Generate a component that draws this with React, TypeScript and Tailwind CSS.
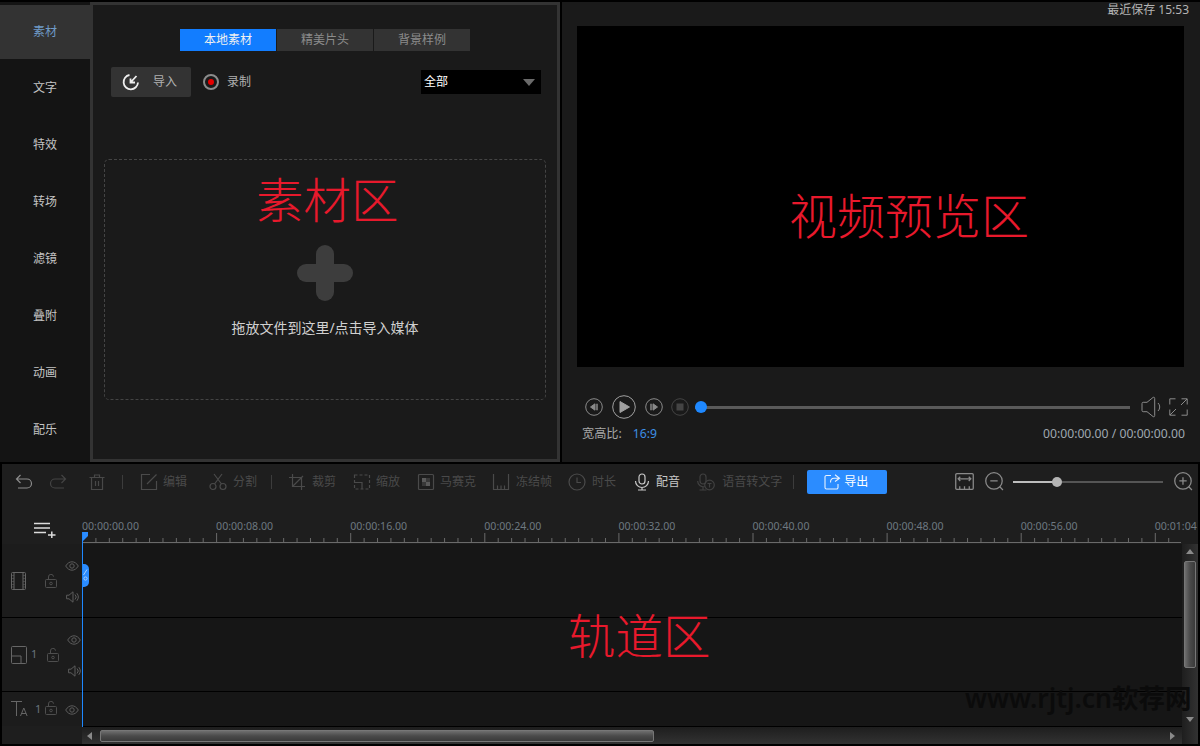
import type { ReactNode } from "react"

const font = "font-['Noto_Sans','Noto_Sans_CJK_SC',sans-serif]"

const sideItems = ["素材", "文字", "特效", "转场", "滤镜", "叠附", "动画", "配乐"]
const times = ["00:00:00.00", "00:00:08.00", "00:00:16.00", "00:00:24.00", "00:00:32.00", "00:00:40.00", "00:00:48.00", "00:00:56.00", "00:01:04"]

function Icon({ size = 18, color = "#4a4a4a", children, className = "" }: { size?: number; color?: string; children: ReactNode; className?: string }) {
  return (
    <svg width={size} height={size} viewBox="0 0 18 18" fill="none" stroke={color} strokeWidth="1.2" className={`shrink-0 ${className}`}>
      {children}
    </svg>
  )
}

function ToolItem({ icon, label, className = "", gap = "ml-[5px]", active = false }: { icon: ReactNode; label: string; className?: string; gap?: string; active?: boolean }) {
  return (
    <div className={`flex items-center ${className}`}>
      {icon}
      <span className={`${gap} text-[12px] leading-none whitespace-nowrap ${active ? "text-[#c8c8c8]" : "text-[#4a4a4a]"}`}>{label}</span>
    </div>
  )
}

function Divider({ className = "" }: { className?: string }) {
  return <div className={`w-px h-[14px] bg-[#3c3c3c] ${className}`} />
}

function Eye() {
  return (
    <svg width="14" height="10" viewBox="0 0 14 10" fill="none" stroke="#5c5c5c" strokeWidth="1">
      <path d="M.7 5C2.5 2 4.7.8 7 .8S11.500 2 13.300 5C11.500 8 9.300 9.200 7 9.200S2.500 8 .7 5Z" />
      <circle cx="7" cy="5" r="2.200" />
    </svg>
  )
}

function Speaker() {
  return (
    <svg width="13" height="12" viewBox="0 0 13 12" fill="none" stroke="#5c5c5c" strokeWidth="1">
      <path d="M.6 4.200H3L7 .8v10.400L3 7.800H.6Z" />
      <path d="M9 3.500a3.500 3.500 0 0 1 0 5M10.800 2.200a6 6 0 0 1 0 7.600" />
    </svg>
  )
}

function Lock() {
  return (
    <svg width="12" height="14" viewBox="0 0 12 14" fill="none" stroke="#4e4e4e" strokeWidth="1">
      <rect x=".5" y="5.500" width="11" height="8" rx="1" />
      <circle cx="6" cy="9.500" r="1.300" />
      <path d="M3.500 5.500V3a2.500 2.500 0 0 1 5-.3" />
    </svg>
  )
}

function Ruler() {
  const ticks = Array.from({ length: 84 }, (_, i) => i)
  return (
    <svg width="1099" height="14" viewBox="0 0 1099 14" className="block">
      {ticks.map((i) => {
        const x = i * 13.41 + 0.5
        const h = i % 10 === 0 ? 9 : 4
        return <line key={i} x1={x} x2={x} y1={12 - h} y2={12} stroke="#6a6a6a" strokeWidth="1" />
      })}
      <line x1="0" x2="1099" y1="12.500" y2="12.500" stroke="#6a6a6a" strokeWidth="1" />
    </svg>
  )
}

function TrackRow({ h, children }: { h: string; children: ReactNode }) {
  return <div className={`flex items-center border-b border-black bg-[#1c1c1c] ${h}`}>{children}</div>
}

export default function App() {
  return (
    <div className={`relative w-[1200px] h-[746px] overflow-hidden bg-black flex flex-col ${font}`}>
      {/* upper half */}
      <div className="flex h-[462px] pt-[2px] shrink-0">
        <aside className="w-[90px] shrink-0 bg-[#141414] pt-[3px] relative z-10">
          {sideItems.map((item, i) => (
            <div
              key={item}
              className={`flex items-center justify-center text-[12px] ${i === 0 ? "w-[93px] bg-[#333333] text-[#6f9bc8] h-[54px] pb-[1px] pr-[3px]" : "h-[57px] text-[#c4c4c4]"}`}
            >
              <span>{item}</span>
            </div>
          ))}
        </aside>

        {/* material panel */}
        <section className="w-[470px] shrink-0 border-[3px] border-[#333333] bg-[#1a1a1a] flex flex-col items-stretch">
          <div className="flex justify-center pt-[24px]">
            <div className="w-[96px] h-[22px] bg-[#127dff] text-[12px] leading-[22px] text-center text-[#f0f0f0]">本地素材</div>
            <div className="w-[96px] h-[22px] ml-px bg-[#333333] text-[12px] leading-[22px] text-center text-[#8c8c8c]">精美片头</div>
            <div className="w-[96px] h-[22px] ml-px bg-[#333333] text-[12px] leading-[22px] text-center text-[#8c8c8c]">背景样例</div>
          </div>
          <div className="flex items-center h-[30px] mt-[16px] pl-[18px] pr-[16px]">
            <div className="w-[80px] h-[30px] rounded-[2px] bg-[#333333] flex items-center pl-[11px]">
              <svg width="18" height="18" viewBox="0 0 18 18" fill="none" stroke="#eeeeee" strokeWidth="1.800">
                <path d="M7.500 2A7.200 7.200 0 1 0 16 9.500" />
                <path d="M14.500 3 8.500 9.500M8.500 5.500v4h4.500" />
              </svg>
              <span className="ml-[13px] text-[12px] text-[#b0b0b0]">导入</span>
            </div>
            <div className="ml-[12px] w-[16px] h-[16px] rounded-full border-2 border-[#8c8c8c] flex items-center justify-center">
              <div className="w-[6px] h-[6px] rounded-full bg-[#e60000]" />
            </div>
            <span className="ml-[8px] text-[12px] text-[#b0b0b0]">录制</span>
            <div className="ml-auto w-[120px] h-[24px] bg-black flex items-center justify-between pl-[3px] pr-[6px]">
              <span className="text-[12px] text-white">全部</span>
              <div className="w-0 h-0 border-x-[6.500px] border-x-transparent border-t-[7px] border-t-[#6a6a6a]" />
            </div>
          </div>
          <div className="mx-[11px] mt-[62px] h-[241px] border border-dashed border-[#444444] rounded-[5px] flex flex-col items-center">
            <div className="mt-[85px] relative w-[56px] h-[56px]">
              <div className="absolute left-0 right-0 top-[19px] h-[18px] rounded-[9px] bg-[#3d3d3d]" />
              <div className="absolute top-0 bottom-0 left-[19px] w-[18px] rounded-[9px] bg-[#3d3d3d]" />
            </div>
            <div className="mt-[18px] text-[14px] leading-[18px] text-[#d0d0d0]">拖放文件到这里/点击导入媒体</div>
          </div>
        </section>

        {/* preview panel */}
        <section className="ml-[2px] flex-1 bg-[#1a1a1a] flex flex-col">
          <div className="h-[24px] flex justify-end pr-[11px] text-[12px] leading-[15px] text-[#b4b4b4]">最近保存 15:53</div>
          <div className="ml-[15px] w-[607px] h-[341px] bg-black" />
          <div className="flex items-center h-[24px] mt-[28px] pl-[23px] pr-[11px]">
            <svg width="18" height="18" viewBox="0 0 18 18" fill="none" stroke="#8a8a8a" strokeWidth="1">
              <circle cx="9" cy="9" r="8.300" />
              <path d="M10 5.800v6.400L5.500 9Z" fill="#8a8a8a" />
              <path d="M12 5.800v6.400" strokeWidth="1.500" />
            </svg>
            <svg width="24" height="24" viewBox="0 0 24 24" fill="none" stroke="#a0a0a0" strokeWidth="1" className="ml-[9px]">
              <circle cx="12" cy="12" r="11.300" />
              <path d="M8 6.500v11L17.500 12Z" fill="#a0a0a0" />
            </svg>
            <svg width="18" height="18" viewBox="0 0 18 18" fill="none" stroke="#8a8a8a" strokeWidth="1" className="ml-[9px]">
              <circle cx="9" cy="9" r="8.300" />
              <path d="M6 5.800v6.400" strokeWidth="1.500" />
              <path d="M8 5.800v6.400L12.500 9Z" fill="#8a8a8a" />
            </svg>
            <svg width="18" height="18" viewBox="0 0 18 18" fill="none" stroke="#444444" strokeWidth="1" className="ml-[8px]">
              <circle cx="9" cy="9" r="8.300" />
              <rect x="6" y="6" width="6" height="6" fill="#444444" />
            </svg>
            <div className="relative ml-[6px] w-[435px] h-[12px] flex items-center">
              <div className="w-full h-[3px] bg-[#5a5a5a]" />
              <div className="absolute left-0 top-0 w-[12px] h-[12px] rounded-full bg-[#1e88ff]" />
            </div>
            <svg width="24" height="22" viewBox="0 0 24 22" fill="none" stroke="#8a8a8a" strokeWidth="1" className="ml-[11px]">
              <path d="M1 7.500c0-.8.500-1.200 1.200-1.200H6L12 1.500c1-.6 1.700-.2 1.700.9v17.200c0 1.100-.7 1.500-1.700.9l-6-4.800H2.200c-.7 0-1.200-.4-1.200-1.200Z" />
              <path d="M17 7a5.500 5.500 0 0 1 0 8" />
            </svg>
            <svg width="19" height="18" viewBox="0 0 19 18" fill="none" stroke="#8a8a8a" strokeWidth="1" className="ml-[4px]">
              <path d="M6.500.8H.8v5.700M12.500.8h5.700v5.700M6.500 17.200H.8v-5.700M12.500 17.200h5.700v-5.700" />
              <path d="M18 1l-6 6M1 17l6-6" />
            </svg>
          </div>
          <div className="flex items-center justify-between h-[16px] mt-[7px] pl-[20px] pr-[15px] text-[12.200px] leading-none">
            <div className="flex">
              <span className="text-[#a8a8a8]">宽高比:</span>
              <span className="ml-[11px] text-[#3d8fe6]">16:9</span>
            </div>
            <span className="text-[#9fa8b0]">00:00:00.00 / 00:00:00.00</span>
          </div>
        </section>
      </div>

      {/* lower half */}
      <div className="mt-[2px] mx-[2px] h-[280px] bg-[#1e1e1e] flex flex-col">
        {/* toolbar */}
        <div className="h-[37px] shrink-0 flex items-center pl-[13px] pb-[2px]">
          <Icon size={18} color="#8c8c8c">
            <path d="M5.500 2 1.500 6l4 4M1.500 6H12a4.500 4.500 0 0 1 0 9H3" />
          </Icon>
          <Icon size={18} color="#444444" className="ml-[16px]">
            <path d="M12.500 2l4 4-4 4M16.500 6H6a4.500 4.500 0 0 0 0 9h9" />
          </Icon>
          <Icon size={18} color="#484848" className="ml-[21px]">
            <path d="M1.500 4.500h15M6.500 4.500V2h5v2.500M3.500 4.500v12h11v-12M7.500 8v5M10.500 8v5" />
          </Icon>
          <Divider className="ml-[16px]" />
          <ToolItem
            className="ml-[17px]"
            label="编辑"
            icon={
              <Icon>
                <path d="M10 1.500H1.500v15h15V8M16.500 1.500 7 11" />
              </Icon>
            }
          />
          <ToolItem
            className="ml-[22px]"
            gap="ml-[6px]"
            label="分割"
            icon={
              <Icon>
                <circle cx="4" cy="13.500" r="3" />
                <circle cx="14" cy="13.500" r="3" />
                <path d="M5.500 11 13 1M12.500 11 5 1" />
              </Icon>
            }
          />
          <Divider className="ml-[14px]" />
          <ToolItem
            className="ml-[16px]"
            gap="ml-[6px]"
            label="裁剪"
            icon={
              <Icon>
                <path d="M4.500 1v12.500H17M1 4.500h12.500V17M4.500 13.500 15 3" />
              </Icon>
            }
          />
          <ToolItem
            className="ml-[17px]"
            label="缩放"
            icon={
              <Icon>
                <path d="M1.500 2h15v14h-15Z" strokeDasharray="3 2" />
                <path d="M1.500 9.500h7.500V16" />
              </Icon>
            }
          />
          <ToolItem
            className="ml-[17px]"
            label="马赛克"
            icon={
              <Icon>
                <rect x="1.500" y="1.500" width="15" height="15" rx="1" />
                <rect x="5" y="5" width="4" height="4" fill="#5a5a5a" stroke="none" />
                <rect x="9" y="9" width="4" height="4" fill="#5a5a5a" stroke="none" />
                <rect x="9" y="5" width="4" height="4" fill="#383838" stroke="none" />
                <rect x="5" y="9" width="4" height="4" fill="#383838" stroke="none" />
              </Icon>
            }
          />
          <ToolItem
            className="ml-[16px]"
            gap="ml-[6px]"
            label="冻结帧"
            icon={
              <Icon>
                <path d="M1.500 1v15.500h15V1M5.500 16.500v-4M9 16.500v-4M12.500 16.500v-4" />
              </Icon>
            }
          />
          <ToolItem
            className="ml-[16px]"
            gap="ml-[6px]"
            label="时长"
            icon={
              <Icon>
                <circle cx="9" cy="9" r="8" />
                <path d="M9 4.500V9.500H13" />
              </Icon>
            }
          />
          <ToolItem
            className="ml-[17px]"
            label="配音"
            active
            icon={
              <Icon color="#c8c8c8">
                <rect x="6" y="1" width="6" height="10" rx="3" />
                <path d="M2.500 8a6.500 6.500 0 0 0 13 0M9 14.500V17M5 17h8" />
              </Icon>
            }
          />
          <ToolItem
            className="ml-[17px]"
            gap="ml-[7px]"
            label="语音转文字"
            icon={
              <Icon color="#404040">
                <rect x="3" y="1" width="6" height="10" rx="3" />
                <path d="M.7 8a5.500 5.500 0 0 0 7 5.500M6 14v3M2.500 17h7" />
                <circle cx="12.500" cy="12" r="4.800" />
                <path d="M10.500 10.500h4M12.500 10.500v4" />
              </Icon>
            }
          />
          <Divider className="ml-[11px]" />
          <div className="ml-[13px] w-[80px] h-[24px] rounded-[2px] bg-[#2b8cff] flex items-center pl-[17px]">
            <svg width="17" height="16" viewBox="0 0 17 16" fill="none" stroke="#e8f2ff" strokeWidth="1.100">
              <path d="M7 1.500H2.500a1.500 1.500 0 0 0-1.500 1.500v10.500a1.500 1.500 0 0 0 1.500 1.500h10a1.500 1.500 0 0 0 1.500-1.500V10" />
              <path d="M11 .8 15.500 4.200 11 7.500M15.500 4.200H10c-2 0-3.500 1.800-3.500 4.300" />
            </svg>
            <span className="ml-[3px] text-[12px] text-white">导出</span>
          </div>
          <Icon size={19} color="#8a8a8a" className="ml-[68px]">
            <rect x=".7" y="1.500" width="16.600" height="15" rx="1" />
            <path d="M3 6.500h12M5 4.500 3 6.500l2 2M13 4.500l2 2-2 2M4.500 16.500v-3M9 16.500v-3M13.500 16.500v-3" />
          </Icon>
          <Icon size={19} color="#8a8a8a" className="ml-[11px]">
            <circle cx="8.500" cy="8.500" r="7.800" />
            <path d="M5 8.500h7M14 14l3 3" />
          </Icon>
          <div className="relative ml-[9px] w-[150px] h-[10px] flex items-center">
            <div className="w-[43px] h-[2px] bg-[#bdbdbd]" />
            <div className="flex-1 h-[2px] bg-[#555555]" />
            <div className="absolute left-[39px] top-0 w-[10px] h-[10px] rounded-full bg-[#b4b4b4]" />
          </div>
          <Icon size={19} color="#8a8a8a" className="ml-[11px]">
            <circle cx="8.500" cy="8.500" r="7.800" />
            <path d="M5 8.500h7M8.500 5v7M14 14l3 3" />
          </Icon>
        </div>

        {/* ruler */}
        <div className="h-[43px] shrink-0 flex">
          <div className="w-[80px] shrink-0 pl-[31px] pt-[21px]">
            <svg width="24" height="16" viewBox="0 0 24 16" fill="none" stroke="#dcdcdc" strokeWidth="1.500">
              <path d="M1 1.500h16M1 6h16M1 10.500h12M15 13h7.500M18.800 9.500v6.500" />
            </svg>
          </div>
          <div className="flex-1 overflow-hidden flex flex-col">
            <div className="flex h-[29px] items-start pt-[18px]">
              {times.map((t) => (
                <div key={t} className="w-[134.100px] shrink-0 text-[10.600px] leading-[14px] text-[#6d7880]">
                  {t}
                </div>
              ))}
            </div>
            <Ruler />
          </div>
        </div>

        {/* tracks */}
        <div className="flex flex-1 min-h-0">
          <div className="flex-1 min-w-0 flex flex-col">
            <div className="flex-1 min-h-0 flex flex-col">
              <TrackRow h="h-[74px] shrink-0">
                <div className="w-[80px] h-full shrink-0 flex items-center">
                  <svg width="15" height="18" viewBox="0 0 15 18" fill="none" stroke="#666666" strokeWidth="1" className="ml-[9px]">
                    <rect x=".5" y=".5" width="14" height="17" rx="1" />
                    <path d="M3 .5v17M12 .5v17" />
                    <path d="M1.500 3.500h1M1.500 6.500h1M1.500 9.500h1M1.500 12.500h1M1.500 15h1M12.500 3.500h1M12.500 6.500h1M12.500 9.500h1M12.500 12.500h1M12.500 15h1" />
                  </svg>
                  <div className="ml-[19px]">
                    <Lock />
                  </div>
                  <div className="ml-[8px] pt-[3px] flex flex-col items-center gap-[20px]">
                    <Eye />
                    <Speaker />
                  </div>
                </div>
                <div className="flex-1 h-full bg-[#161616]" />
              </TrackRow>
              <TrackRow h="h-[74px] shrink-0">
                <div className="w-[80px] h-full shrink-0 flex items-center">
                  <svg width="16" height="18" viewBox="0 0 16 18" fill="none" stroke="#666666" strokeWidth="1" className="ml-[9px]">
                    <rect x=".5" y=".5" width="15" height="17" rx="1" />
                    <path d="M.5 10h9.500v7.500" />
                  </svg>
                  <span className="ml-[4px] w-[14px] text-[11px] text-[#6a747c]">1</span>
                  <div className="ml-[2px]">
                    <Lock />
                  </div>
                  <div className="ml-[8px] pt-[3px] flex flex-col items-center gap-[20px]">
                    <Eye />
                    <Speaker />
                  </div>
                </div>
                <div className="flex-1 h-full bg-[#161616]" />
              </TrackRow>
              <div className="flex flex-1 bg-[#1c1c1c]">
                <div className="w-[80px] shrink-0 flex items-start pt-[9px]">
                  <svg width="17" height="16" viewBox="0 0 17 16" fill="none" stroke="#666666" strokeWidth="1" className="ml-[9px]">
                    <path d="M0 .5h11M5.500 .5V15" />
                    <path d="M9.500 15 12.800 7l3.300 8M10.500 12.500h4.600" />
                  </svg>
                  <span className="ml-[7px] w-[9px] text-[11px] leading-[16px] text-[#6a747c]">1</span>
                  <div className="ml-[1px]">
                    <Lock />
                  </div>
                  <div className="ml-[8px] mt-[4px]">
                    <Eye />
                  </div>
                </div>
                <div className="flex-1 bg-[#161616]" />
              </div>
            </div>
            {/* horizontal scrollbar */}
            <div className="h-[18px] shrink-0 flex">
              <div className="w-[80px] shrink-0" />
              <div className="flex-1 border-t border-black bg-[linear-gradient(#1e1e1e,#323232)] flex items-center pl-[5px] pr-[7px]">
                <div className="w-0 h-0 border-y-[4px] border-y-transparent border-r-[5px] border-r-[#8a8a8a]" />
                <div className="ml-[8px] w-[554px] h-[12px] rounded-[2px] border border-[#777777] bg-[linear-gradient(#6e6e6e,#4a4a4a_50%,#3a3a3a)]" />
                <div className="ml-auto w-0 h-0 border-y-[4px] border-y-transparent border-l-[5px] border-l-[#8a8a8a]" />
              </div>
            </div>
          </div>
          {/* vertical scrollbar */}
          <div className="w-[16px] shrink-0 bg-[linear-gradient(90deg,#1e1e1e,#323232)] flex flex-col items-center pt-[5px] pb-[22px]">
            <div className="w-0 h-0 border-x-[4px] border-x-transparent border-b-[5px] border-b-[#8a8a8a]" />
            <div className="mt-[7px] w-[12px] h-[107px] rounded-[2px] border border-[#777777] bg-[linear-gradient(90deg,#6e6e6e,#4a4a4a_50%,#3a3a3a)]" />
            <div className="mt-auto w-0 h-0 border-x-[4px] border-x-transparent border-t-[5px] border-t-[#8a8a8a]" />
          </div>
        </div>
      </div>

      {/* playhead */}
      <div className="absolute left-[82px] top-[532px] w-[6px] h-[10px] bg-[#2b8cff] [clip-path:polygon(0_0,100%_0,100%_40%,0_100%)]" />
      <div className="absolute left-[82px] top-[532px] w-px h-[195px] bg-[#1e88ff]" />
      <div className="absolute left-[83px] top-[564px] w-[6px] h-[23px] rounded-r-[5px] bg-[#2b8cff] flex items-center">
        <svg width="6" height="13" viewBox="0 0 6 13" fill="none" stroke="#a8d0ff" strokeWidth="1">
          <path d="M4 .5.5 6" />
          <circle cx="2.500" cy="9.500" r="1.600" />
        </svg>
      </div>

      {/* red annotations */}
      <div className="absolute left-[256px] top-[167px] text-[47.500px] leading-[66px] font-light text-[#e8192c]">素材区</div>
      <div className="absolute left-[789px] top-[183px] text-[48px] leading-[66px] font-light text-[#e8192c]">视频预览区</div>
      <div className="absolute left-[568px] top-[603px] text-[47.500px] leading-[66px] font-light text-[#e8192c]">轨道区</div>

      {/* watermark */}
      <div className="absolute left-[965px] top-[680px] text-[26.500px] leading-[36px] font-semibold whitespace-nowrap text-[#0b0b0b]">www.rjtj.cn软荐网</div>
    </div>
  )
}
